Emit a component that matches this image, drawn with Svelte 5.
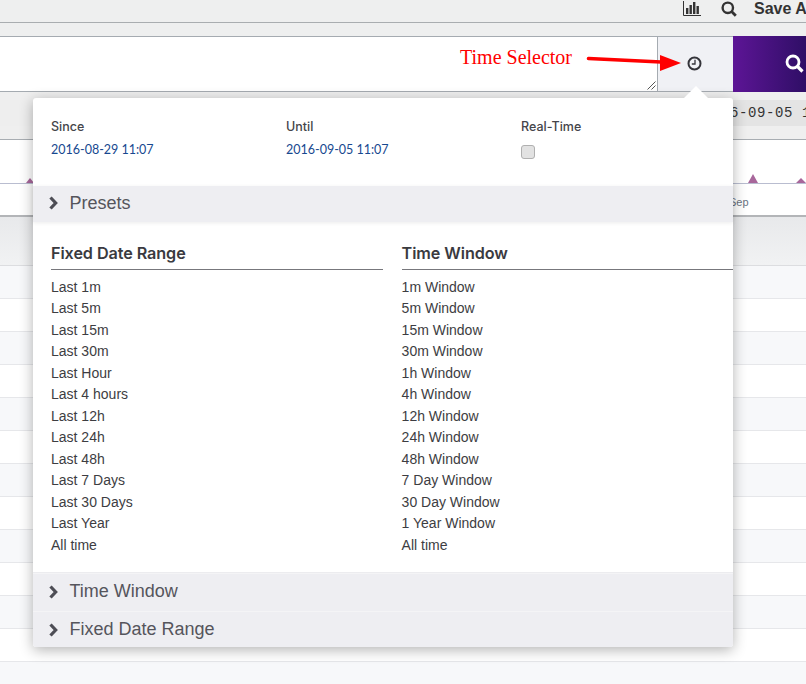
<script>
	const since = '2016-08-29 11:07';
	const until = '2016-09-05 11:07';

	const fixedRanges = [
		'Last 1m', 'Last 5m', 'Last 15m', 'Last 30m', 'Last Hour', 'Last 4 hours', 'Last 12h',
		'Last 24h', 'Last 48h', 'Last 7 Days', 'Last 30 Days', 'Last Year', 'All time'
	];
	const timeWindows = [
		'1m Window', '5m Window', '15m Window', '30m Window', '1h Window', '4h Window', '12h Window',
		'24h Window', '48h Window', '7 Day Window', '30 Day Window', '1 Year Window', 'All time'
	];
	const rows = Array.from({ length: 13 }, (_, i) => i);
</script>

<div class="page">
	<header class="topbar">
		<svg class="tool" width="18" height="15" viewBox="0 0 18 15" aria-hidden="true">
			<path d="M0.5 0v14.5H18" fill="none" stroke="#333" stroke-width="1"/>
			<path d="M3 7h2.4v6H3zM6.5 4h2.4v9H6.5zM10 1h2.4v12H10zM13.5 5h2.4v8h-2.4z" fill="#333"/>
		</svg>
		<svg class="tool" width="16" height="16" viewBox="0 0 16 16" aria-hidden="true">
			<circle cx="6.8" cy="6.8" r="5.2" fill="none" stroke="#333" stroke-width="2.4"/>
			<path d="M10.6 10.6l4.2 4.2" stroke="#333" stroke-width="2.8"/>
		</svg>
		<span class="save">Save As</span>
	</header>

	<div class="searchbar">
		<div class="query">
			<svg class="grip" width="9" height="9" viewBox="0 0 9 9" aria-hidden="true">
				<path d="M0.5 8.5L8.5 0.5M4.5 8.5L8.5 4.5" stroke="#555" stroke-width="1"/>
			</svg>
		</div>
		<div class="clock">
			<svg width="15" height="15" viewBox="0 0 15 15" aria-hidden="true">
				<circle cx="7.5" cy="7.5" r="6" fill="none" stroke="#34343a" stroke-width="2"/>
				<path d="M8 3.8V8H4.8" fill="none" stroke="#34343a" stroke-width="1.3"/>
			</svg>
		</div>
		<div class="go">
			<svg width="19" height="19" viewBox="0 0 19 19" aria-hidden="true">
				<circle cx="8" cy="8" r="6" fill="none" stroke="#fff" stroke-width="2.8"/>
				<path d="M12.5 12.5l5 5" stroke="#fff" stroke-width="3.2"/>
			</svg>
		</div>
	</div>

	<div class="range"><span>2016-09-05 11:07</span></div>

	<div class="chart">
		<svg width="806" height="46" viewBox="0 0 806 46" aria-hidden="true">
			<path d="M0 43.5H806" stroke="#b9bdd0" stroke-width="1"/>
			<path d="M26 43l4-5 4 5zM748 43l5-9 5 9zM796 43l5-5 5 5z" fill="#a8679b"/>
		</svg>
	</div>
	<div class="axis"><span>Sep</span></div>
	<div class="table-head"></div>
	{#each rows as row}
		<div class="row" class:odd={row % 2 === 0}></div>
	{/each}

	<div class="annotation">
		<span>Time Selector</span>
		<svg width="108" height="24" viewBox="0 0 108 24" aria-hidden="true">
			<path d="M3.5 9.5L76 13" stroke="#f00" stroke-width="3.6" stroke-linecap="round"/>
			<path d="M75 6L96 14L75 22z" fill="#f00"/>
		</svg>
	</div>

	<section class="popover">
		<div class="caret"></div>
		<div class="summary">
			<div class="field since">
				<div class="label">Since</div>
				<div class="value">{since}</div>
			</div>
			<div class="field until">
				<div class="label">Until</div>
				<div class="value">{until}</div>
			</div>
			<div class="field">
				<div class="label">Real-Time</div>
				<div class="checkbox"></div>
			</div>
		</div>

		<div class="accordion first">
			<svg width="11" height="14" viewBox="0 0 11 14" aria-hidden="true"><path d="M2.5 1.5l5.2 5.5-5.2 5.5" fill="none" stroke="#4d4d55" stroke-width="3.2"/></svg>
			Presets
		</div>

		<div class="lists">
			<div class="col">
				<h3>Fixed Date Range</h3>
				<ul>
					{#each fixedRanges as item}<li>{item}</li>{/each}
				</ul>
			</div>
			<div class="col wide">
				<h3>Time Window</h3>
				<ul>
					{#each timeWindows as item}<li>{item}</li>{/each}
				</ul>
			</div>
		</div>

		<div class="accordion middle">
			<svg width="11" height="14" viewBox="0 0 11 14" aria-hidden="true"><path d="M2.5 1.5l5.2 5.5-5.2 5.5" fill="none" stroke="#4d4d55" stroke-width="3.2"/></svg>
			Time Window
		</div>
		<div class="accordion last">
			<svg width="11" height="14" viewBox="0 0 11 14" aria-hidden="true"><path d="M2.5 1.5l5.2 5.5-5.2 5.5" fill="none" stroke="#4d4d55" stroke-width="3.2"/></svg>
			Fixed Date Range
		</div>
	</section>
</div>

<style>
	:global(body) {
		margin: 0;
		background: #fff;
	}

	.page {
		position: relative;
		width: 806px;
		height: 684px;
		overflow: hidden;
		font-family: "Liberation Sans", Arial, sans-serif;
		color: #333;
	}

	.topbar {
		box-sizing: border-box;
		height: 23px;
		background: #eeefef;
		border-bottom: 1px solid #a9adb0;
		display: flex;
		align-items: flex-start;
		justify-content: flex-end;
		white-space: nowrap;
	}

	.tool {
		margin-top: 1px;
		flex: none;
	}

	.tool:first-child {
		margin-right: 20px;
	}

	.tool + .tool {
		margin-right: 17px;
	}

	.save {
		flex: none;
		width: 52px;
		overflow: hidden;
		font-size: 16px;
		font-weight: 700;
		line-height: 18px;
	}

	.searchbar {
		box-sizing: border-box;
		height: 69px;
		padding-top: 13px;
		background: #eeefef;
		display: flex;
	}

	.query {
		position: relative;
		box-sizing: border-box;
		flex: none;
		width: 658px;
		background: #fff;
		border: 1px solid #a5abb1;
		border-left: 0;
	}

	.grip {
		position: absolute;
		right: 1px;
		bottom: 1px;
	}

	.clock {
		box-sizing: border-box;
		flex: none;
		width: 75px;
		padding-left: 29px;
		padding-top: 19px;
		background: #f0f1f5;
		border-top: 1px solid #a5abb1;
		border-bottom: 1px solid #a5abb1;
	}

	.go {
		flex: 1;
		padding: 18px 0 0 52px;
		background: linear-gradient(90deg, #5d1596, #2f0e66);
	}

	.range {
		box-sizing: border-box;
		height: 48px;
		padding-top: 8px;
		background: #efefef;
		border-bottom: 1px solid #a8adb2;
	}

	.range span {
		box-sizing: border-box;
		display: block;
		height: 26px;
		padding-left: 703px;
		background: linear-gradient(90deg, #eee 733px, #e4e4e4 733px);
		font-family: "Liberation Mono", monospace;
		font-size: 14px;
		line-height: 27px;
		letter-spacing: 0.6px;
		white-space: nowrap;
	}

	.chart {
		height: 46px;
		background: #fff;
	}

	.chart svg {
		display: block;
	}

	.axis {
		box-sizing: border-box;
		height: 31px;
		padding: 9px 0 0 729px;
		background: #fff;
		border-bottom: 2px solid #b3b5b8;
		font-size: 11px;
		line-height: 15px;
		color: #6a7382;
	}

	.table-head {
		box-sizing: border-box;
		height: 49px;
		background: linear-gradient(180deg, #e8e9eb, #f1f2f3);
		border-bottom: 1px solid #dcdde0;
	}

	.row {
		box-sizing: border-box;
		height: 33px;
		background: #fff;
		border-bottom: 1px solid #e6e7ea;
	}

	.row.odd {
		background: #f7f8fa;
	}

	.annotation {
		position: absolute;
		left: 460px;
		top: 46px;
		display: flex;
		align-items: flex-start;
		gap: 13px;
		font-family: "Liberation Serif", serif;
		font-size: 20px;
		line-height: 23px;
		color: #f00;
		white-space: nowrap;
		z-index: 2;
	}

	.annotation svg {
		margin-top: 3px;
	}

	.popover {
		position: absolute;
		left: 33px;
		top: 98px;
		width: 700px;
		height: 549px;
		display: flex;
		flex-direction: column;
		background: #fff;
		border-radius: 3px;
		box-shadow: 0 3px 14px rgba(0, 0, 0, 0.3);
		color: #3d3d42;
	}

	.caret {
		position: absolute;
		left: 651px;
		top: -12px;
		border-left: 12px solid transparent;
		border-right: 12px solid transparent;
		border-bottom: 12px solid #fff;
	}

	.summary {
		height: 88px;
		flex: none;
		box-sizing: border-box;
		padding: 21px 0 0 18px;
		display: flex;
		font-family: Lato, sans-serif;
		font-size: 13px;
	}

	.field.since,
	.field.until {
		width: 235px;
	}

	.label {
		font-family: Inter, sans-serif;
		font-size: 12.5px;
		font-weight: 500;
		line-height: 16px;
		color: #45454a;
	}

	.value {
		margin-top: 6px;
		font-size: 12.5px;
		line-height: 17px;
		color: #17488f;
	}

	.checkbox {
		box-sizing: border-box;
		width: 14px;
		height: 14px;
		margin-top: 10px;
		background: #e2e2e2;
		border: 1px solid #b0b0b0;
		border-radius: 3px;
	}

	.accordion {
		box-sizing: border-box;
		flex: none;
		display: flex;
		align-items: center;
		gap: 10.5px;
		padding-left: 15px;
		background: #eeeef2;
		font-size: 18px;
		color: #55555c;
	}

	.accordion.first {
		height: 36px;
		padding-bottom: 2px;
		box-shadow: 0 1px 4px rgba(0, 0, 0, 0.08);
	}

	.accordion.middle {
		height: 38px;
		padding-bottom: 2px;
		border-top: 1px solid #f4f4f6;
	}

	.accordion.last {
		height: 36px;
		border-top: 1px solid #f4f4f6;
		border-radius: 0 0 3px 3px;
	}

	.lists {
		flex: 1;
		display: flex;
		padding: 21px 0 0 18px;
		border-bottom: 1px solid #ececef;
	}

	.col {
		flex: none;
		width: 332px;
		margin-right: 18.6px;
	}

	.col.wide {
		width: 331.4px;
		margin-right: 0;
	}

	h3 {
		margin: 0 0 6.6px;
		height: 26px;
		font-family: Inter, sans-serif;
		font-size: 16.2px;
		font-weight: 600;
		line-height: 21px;
		letter-spacing: -0.08px;
		color: #3a3a3f;
		border-bottom: 1px solid #77777c;
	}

	ul {
		margin: 0;
		padding: 0;
		list-style: none;
	}

	li {
		height: 21.5px;
		font-family: "Liberation Sans", Arial, sans-serif;
		font-size: 14px;
		line-height: 21.5px;
		color: #3d3d42;
	}
</style>
